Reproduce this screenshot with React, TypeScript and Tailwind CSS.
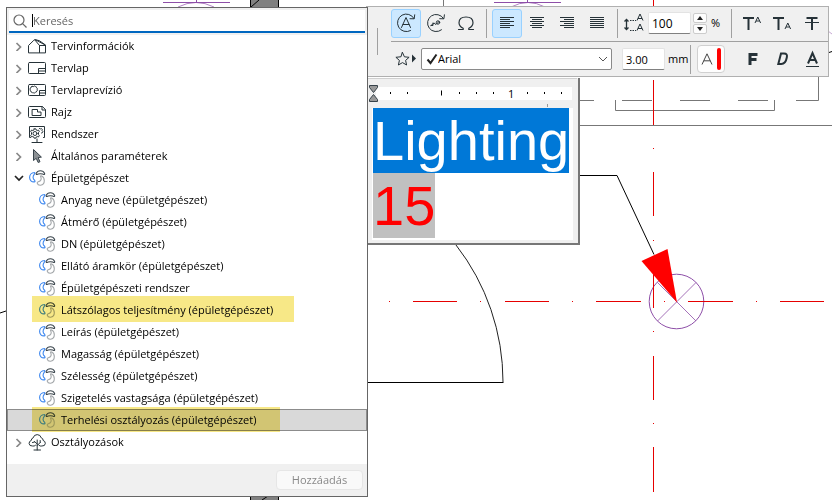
import { useState, type ReactNode } from 'react';
import clsx from 'clsx';

interface TreeItem {
    label: string;
    icon: ReactNode;
    children?: string[];
}

const stroke = { fill: 'none', stroke: '#263238', strokeWidth: 1, strokeLinejoin: 'round' as const, strokeLinecap: 'round' as const };

function HouseIcon() {
    return (
        <svg viewBox="0 0 18 18" className="w-[18px] h-[18px]" {...stroke}>
            <path d="M.5 15.5V8.5L5.8 3.3q.7-.6 1.6-.6l4 1 6.100 4.300v7.500z" />
            <path d="M6.800 2.900l4.700 5.600v7M7.500 2.800l9.700 5.200M11.500 8.500h6" />
        </svg>
    );
}

function LayoutIcon() {
    return (
        <svg viewBox="0 0 18 18" className="w-[18px] h-[18px]" {...stroke}>
            <rect x=".5" y="3.5" width="17" height="11" rx="1" />
            <path d="M17.5 9.5h-7v5M10.5 12h7" />
        </svg>
    );
}

function RevisionIcon() {
    return (
        <svg viewBox="0 0 18 18" className="w-[18px] h-[18px]" {...stroke}>
            <rect x=".5" y="3.5" width="17" height="11" rx="1" />
            <path d="M17.5 9.5h-6v5M11.5 12h6" />
            <path d="M4 5.5q.9-.7 1.7.1.800-1.100 1.700-.1 1.200 0 1.100 1.200 1.200.5.7 1.600.7 1.100-.5 1.700 0 1.200-1.200 1.300-.7 1.100-1.800.5-1.200.6-1.800-.6-1.300-.1-1.200-1.300-1.100-.7-.5-1.700-.5-1.200.7-1.600-.1-1.100 1.100-1.100z" />
        </svg>
    );
}

function DrawingIcon() {
    return (
        <svg viewBox="0 0 18 18" className="w-[18px] h-[18px]" {...stroke}>
            <path d="M14 3.5H1.5q-1 0-1 1v9q0 1 1 1h15q1 0 1-1V7zM14 3.5V7h3.5" />
            <path d="M4.5 6.500h5v2.500h3.500v3.500H4.500z" />
        </svg>
    );
}

function SystemIcon() {
    return (
        <svg viewBox="0 0 18 18" className="w-[18px] h-[18px]" {...stroke}>
            <path d="M2.500 12.500h-1v-11h15v11h-1M9 14v3M4 17.500h10" />
            <circle cx="7" cy="8.500" r="2" />
            <path d="M6.200 3.800h1.600l.4 1.200 1 .5 1.200-.5.9 1.400-.8 1v2.200l.8 1-.9 1.400-1.200-.5-1 .5-.4 1.200H6.200l-.4-1.200-1-.5-1.200.5-.9-1.400.8-1V7.400l-.8-1L3.600 5l1.200.5 1-.5z" />
            <path d="M11.500 3.500l1 .4 1-.3.8 1-.3 1 .9.9-.5 1.200-.9.300" />
        </svg>
    );
}

function PointerIcon() {
    return (
        <svg viewBox="0 0 18 18" className="w-[18px] h-[18px]">
            <path d="M5.500 2.500v11l2.700-2.200 2 4.200 1.800-.8-1.900-4.100 3.300-.5z" fill="#8b9094" stroke="#37424a" strokeLinejoin="round" />
        </svg>
    );
}

function MepIcon() {
    return (
        <svg viewBox="0 0 18 18" className="w-[18px] h-[18px]" fill="none" strokeWidth="1.100" strokeLinejoin="round">
            <path d="M6.300 3.500C3.500 3.700 1.600 6 1.600 8.600c0 2.600 2 4.500 4.600 4.300 1-.1 1.100-1 .4-1.600C4.600 9.800 4.600 7.300 6.400 5.100c.6-.8.7-1.700-.1-1.600z" stroke="#3d87ef" />
            <path d="M9 5.500c-.8 0-1-.5-.8-1.100.7-1.700 2.200-2.700 4.200-2.700s3.500 1 4.200 2.700c.2.600 0 1.100-.8 1.100l-1.200-.4q-2.200-.7-4.400 0z" stroke="#37424a" />
            <path d="M12.600 7.500c1.300 2.400.5 4.700-2.300 5.300-.9.200-1.200.7-1.100 1.300.4 1.400 1.700 2.200 3.300 2.100 2.200-.2 3.800-2.100 3.800-4.500 0-2.200-1-4.100-2.700-4.800-.8-.3-1.300 0-1 .6z" stroke="#a2a6a9" />
        </svg>
    );
}

function TreeIcon() {
    return (
        <svg viewBox="0 0 18 18" className="w-[18px] h-[18px]" {...stroke}>
            <path d="M7.500 12.300q-1.300 1.200-3 .7-3.200.2-3.400-2.500-.1-2.300 2.200-3.100-.1-1.900 1.800-2.500Q6 1.600 9.200 1.600t4.100 3.300q2 .6 1.800 2.500 2.300.8 2.200 3.100-.2 2.700-3.400 2.500-1.700.5-3-.7" />
            <path d="M9.200 7v10M9.200 11L6.500 8.500M9.200 12.500l3-3M4.500 9.500l2-.5M12.200 9.500V7.500M6 17h6.500" />
        </svg>
    );
}

const treeItems: TreeItem[] = [
    { label: 'Tervinformációk', icon: <HouseIcon /> },
    { label: 'Tervlap', icon: <LayoutIcon /> },
    { label: 'Tervlaprevízió', icon: <RevisionIcon /> },
    { label: 'Rajz', icon: <DrawingIcon /> },
    { label: 'Rendszer', icon: <SystemIcon /> },
    { label: 'Általános paraméterek', icon: <PointerIcon /> },
    {
        label: 'Épületgépészet',
        icon: <MepIcon />,
        children: [
            'Anyag neve (épületgépészet)',
            'Átmérő (épületgépészet)',
            'DN (épületgépészet)',
            'Ellátó áramkör (épületgépészet)',
            'Épületgépészeti rendszer',
            'Látszólagos teljesítmény (épületgépészet)',
            'Leírás (épületgépészet)',
            'Magasság (épületgépészet)',
            'Szélesség (épületgépészet)',
            'Szigetelés vastagsága (épületgépészet)',
            'Terhelési osztályozás (épületgépészet)'
        ]
    },
    { label: 'Osztályozások', icon: <TreeIcon /> }
];

// highlighter marks drawn over individual parameters
const marks: Record<string, string> = {
    'Látszólagos teljesítmény (épületgépészet)': 'w-[262px] -top-[3px] -bottom-px',
    'Terhelési osztályozás (épületgépészet)': 'w-[248px] -top-[2px] -bottom-px'
};

function PlanDrawing() {
    return (
        <svg className="absolute inset-0 w-[832px] h-[500px]" viewBox="0 0 832 500" fill="none">
            <g stroke="#777">
                <path d="M443.500 0v7M818.500 77v23.500H796M768 100.500h-30M710 100.500h-30M652 100.500h-30M594 100.500h-14" />
                <path d="M615.500 100v10.500h159V100M580 125.500h252" />
            </g>
            <g stroke="#8e4fa8">
                <path d="M163 2.500h67M196.500 0v2M494 2.500h67M527.500 0v2" />
                <path d="M178 7q18-9 36 0M511 7q17-9 34 0" opacity=".7" />
                <circle cx="676.500" cy="301.500" r="27.300" />
                <path d="M657.500 282.500l38.500 38.500M696 282.500L657.500 321" opacity=".8" />
                <path d="M828 31l4 3" opacity=".5" />
            </g>
            <path d="M250.500 -1h28v502h-28z" fill="#808080" stroke="#000" />
            <path d="M251 7l8-7M262 500l6-4" stroke="#000" />
            <g stroke="#000">
                <path d="M0 313l6-2M829 52.500l3-1M580 175.500h37l37 79" />
                <path d="M368 382.500h135.500" />
                <path d="M456 245A223 223 0 0 1 503 382" stroke="#222" />
            </g>
            <g stroke="#e60000">
                <path d="M653.500 0v6M653.500 80v45M653.500 148v1M653.500 172v44M653.500 240v1M653.500 264v44M653.500 331v1M653.500 356v44M653.500 423v1M653.500 447v45" />
                <path d="M389 301.500h1M413 301.500h44M480 301.500h1M505 301.500h44M572 301.500h1M596 301.500h45M664 301.500h1M688 301.500h45M756 301.500h1M780 301.500h44" />
            </g>
            <path d="M641.500 261L667.500 249 677 302.500z" fill="#f00" />
        </svg>
    );
}

function ParameterRow({ label, selected, onSelect }: { label: string; selected: boolean; onSelect: () => void }) {
    return (
        <li className="relative">
            <button
                onClick={onSelect}
                className={clsx(
                    'flex items-center w-full h-[22px] pl-[30px] border whitespace-nowrap',
                    selected ? 'bg-[#d9d9d9] border-[#8c8c8c]' : 'border-transparent'
                )}
            >
                <MepIcon />
                <span className="pl-[5px]">{label}</span>
            </button>
            {marks[label] && (
                <span className={clsx('absolute left-[25px] bg-[#f7e887] mix-blend-multiply pointer-events-none', marks[label])} />
            )}
        </li>
    );
}

function ParameterPanel() {
    const [open, setOpen] = useState('Épületgépészet');
    const [selected, setSelected] = useState('Terhelési osztályozás (épületgépészet)');
    const [search, setSearch] = useState('');

    return (
        <div className="absolute left-[6px] top-[7px] w-[362px] border border-[#666] bg-white z-20">
            <div className="bg-[#f0f0f0] px-[2px] pt-[2px] pb-[2px]">
                <label className="flex items-center h-[23px] px-[4px] bg-white border-b-2 border-[#0067c0]">
                    <svg viewBox="0 0 14 14" className="w-[14px] h-[14px]" fill="none" stroke="#666" strokeWidth="1.200">
                        <circle cx="6" cy="6" r="5" />
                        <path d="M9.600 9.600l3.900 3.900" />
                    </svg>
                    <span className="w-px h-[13px] bg-black ml-[5px]" />
                    <input
                        type="text"
                        aria-label="Keresés"
                        placeholder="Keresés"
                        value={search}
                        onChange={(e) => setSearch(e.target.value)}
                        className="flex-1 min-w-0 outline-none placeholder:text-[#666]"
                    />
                </label>
            </div>
            <ul className="pb-[11px]">
                {treeItems.map((item) => (
                    <li key={item.label}>
                        <button
                            onClick={() => setOpen(open === item.label ? '' : item.label)}
                            className="flex items-center w-full h-[22px] pl-[7px] whitespace-nowrap"
                        >
                            {open === item.label ? (
                                <svg viewBox="0 0 10 10" className="w-[10px] h-[10px] mr-1" fill="none" stroke="#222" strokeWidth="1.700">
                                    <path d="M1 3l4 4 4-4" />
                                </svg>
                            ) : (
                                <svg viewBox="0 0 10 10" className="w-[10px] h-[10px] mr-1" fill="none" stroke="#888" strokeWidth="1.700">
                                    <path d="M2.500 2l4 4-4 4" />
                                </svg>
                            )}
                            {item.icon}
                            <span className="pl-[5px]">{item.label}</span>
                        </button>
                        {item.children && open === item.label && (
                            <ul>
                                {item.children.map((child) => (
                                    <ParameterRow key={child} label={child} selected={selected === child} onSelect={() => setSelected(child)} />
                                ))}
                            </ul>
                        )}
                    </li>
                ))}
            </ul>
            <div className="flex justify-end items-center h-8 px-1 bg-[#f0f0f0]">
                <button disabled className="w-[87px] h-5 rounded border border-[#e6e6e6] bg-[#f9f9f9] text-[#888]">
                    Hozzáadás
                </button>
            </div>
        </div>
    );
}

function ToolButton({ label, active, children }: { label: string; active?: boolean; children: ReactNode }) {
    return (
        <button
            aria-label={label}
            className={clsx(
                'flex items-center justify-center shrink-0 w-[30px] h-[29px] rounded-[3px] border',
                active ? 'bg-[#cce8ff] border-[#99d1ff]' : 'border-transparent'
            )}
        >
            {children}
        </button>
    );
}

function Divider() {
    return <span className="w-px h-[29px] bg-[#a0a0a0] shrink-0" />;
}

function AlignIcon({ d }: { d: string }) {
    return (
        <svg viewBox="0 0 16 12" className="w-[16px] h-[12px]" stroke="#263238" fill="none">
            <path d={d} />
        </svg>
    );
}

function TextToolbar() {
    const [spacing, setSpacing] = useState(100);
    const [size, setSize] = useState('3.00');

    return (
        <div className="absolute left-[366px] right-[3px] top-[6px] flex bg-[#f0f0f0] border border-[#b0b0b0] z-10">
            <span className="w-px h-[27px] mt-[21px] ml-[10px] bg-[#a0a0a0] shrink-0" />
            <div className="flex-1 min-w-0 ml-[13px]">
                <div className="flex items-center h-[35px] pb-1 pt-[2px] border-b border-[#a0a0a0]">
                    <ToolButton label="Szöveg forgatása" active>
                        <svg viewBox="0 0 20 20" className="w-5 h-5" {...stroke}>
                            <path d="M18 5.500A8.800 8.800 0 1 0 14.500 17.600M14 5.700l4.200.100.500-4" />
                            <path d="M5.500 14.500L10 4.500l4.500 10.000M7 11.500h6" />
                        </svg>
                    </ToolButton>
                    <ToolButton label="Követő forgatás">
                        <svg viewBox="0 0 20 20" className="w-5 h-5" {...stroke}>
                            <path d="M17.500 5.500A8.600 8.600 0 1 0 15.500 16.800M13.700 5.700l4.200.100.500-4" />
                            <circle cx="12" cy="9.500" r="1.700" />
                            <path d="M5 12.500L8 10l2 1.500 3.200-3.200M7 10v2.500H5" />
                        </svg>
                    </ToolButton>
                    <ToolButton label="Szimbólum">
                        <svg viewBox="0 0 20 20" className="w-5 h-5" {...stroke} strokeWidth="1.200">
                            <path d="M2.500 16.500h4.700v-1.200Q3 13.400 3 9.800 3 4 10 4t7 5.800q0 3.600-4.200 5.500v1.200h4.700" />
                        </svg>
                    </ToolButton>
                    <span className="ml-[5px] mr-[5px] flex"><Divider /></span>
                    <ToolButton label="Balra" active>
                        <AlignIcon d="M1 .5h14M1 2.500h10M1 4.500h14M1 6.500h10M1 8.500h14M1 10.500h10" />
                    </ToolButton>
                    <ToolButton label="Középre">
                        <AlignIcon d="M1 .5h14M3 2.500h10M1 4.500h14M3 6.500h10M1 8.500h14M3 10.500h10" />
                    </ToolButton>
                    <ToolButton label="Jobbra">
                        <AlignIcon d="M1 .5h14M5 2.500h10M1 4.500h14M5 6.500h10M1 8.500h14M5 10.500h10" />
                    </ToolButton>
                    <ToolButton label="Sorkizárt">
                        <AlignIcon d="M1 .5h14M1 2.500h14M1 4.500h14M1 6.500h14M1 8.500h14M1 10.500h14" />
                    </ToolButton>
                    <span className="ml-[5px] mr-[6px] flex"><Divider /></span>
                    <label htmlFor="spacing" aria-label="Sorköz" className="shrink-0">
                        <svg viewBox="0 0 20 20" className="w-5 h-5" fill="none" stroke="#263238">
                            <path d="M2.500 7v9M.5 8.500l2-2 2 2M.5 14.500l2 2 2-2" strokeWidth="1.300" />
                            <path d="M6 7.500h6M6 17.500h6" strokeDasharray="1.500 1" />
                            <path d="M13 7.500l3-6.500 3 6.500M14 5.500h4M13 17.500l3-6.500 3 6.500M14 15.500h4" />
                        </svg>
                    </label>
                    <input
                        id="spacing"
                        value={spacing}
                        onChange={(e) => setSpacing(Number(e.target.value) || 0)}
                        className="w-[43px] h-[22px] ml-[4px] px-[3px] bg-white border border-[#e3e3e3] border-b-[#808080] rounded-[2px] outline-none text-[12px]"
                    />
                    <div className="flex flex-col ml-[2px] gap-px">
                        <button aria-label="Növelés" onClick={() => setSpacing(spacing + 1)} className="flex items-center justify-center w-[14px] h-[10px] bg-[#fdfdfd] border border-[#ccc] rounded-[2px]">
                            <svg viewBox="0 0 6 4" className="w-[6px] h-[4px]"><path d="M0 4l3-4 3 4z" fill="#222" /></svg>
                        </button>
                        <button aria-label="Csökkentés" onClick={() => setSpacing(spacing - 1)} className="flex items-center justify-center w-[14px] h-[10px] bg-[#fdfdfd] border border-[#ccc] rounded-[2px]">
                            <svg viewBox="0 0 6 4" className="w-[6px] h-[4px]"><path d="M0 0l3 4 3-4z" fill="#222" /></svg>
                        </button>
                    </div>
                    <span className="ml-[4px] mr-[10px] w-[10px]">%</span>
                    <Divider />
                    <div className="flex ml-[5px]">
                        <ToolButton label="Felső index">
                            <svg viewBox="0 0 20 16" className="w-5 h-4" fill="none" stroke="#263238">
                                <path d="M1 3h11M6.500 3v12" strokeWidth="2" />
                                <path d="M13 8l2.800-6 2.800 6M14 6h3.600" />
                            </svg>
                        </ToolButton>
                        <ToolButton label="Alsó index">
                            <svg viewBox="0 0 20 16" className="w-5 h-4" fill="none" stroke="#263238">
                                <path d="M1 3h11M6.500 3v12" strokeWidth="2" />
                                <path d="M13 14l2.800-6 2.800 6M14 12h3.600" />
                            </svg>
                        </ToolButton>
                        <ToolButton label="Áthúzott">
                            <svg viewBox="0 0 20 16" className="w-5 h-4" fill="none" stroke="#263238">
                                <path d="M4.500 3h11M10 3v12" strokeWidth="2" />
                                <path d="M3 7.500h14" />
                            </svg>
                        </ToolButton>
                    </div>
                </div>
                <div className="flex items-center h-[34px]">
                    <button aria-label="Kedvencek" className="flex items-center shrink-0 w-[26px] ml-[4px]">
                        <svg viewBox="0 0 22 16" className="w-[22px] h-4" {...stroke}>
                            <path d="M7.500 1.500l1.900 4.300 4.700.5-3.500 3.100 1 4.600-4.100-2.400L3.400 14l1-4.600L.9 6.300l4.700-.5z" />
                            <path d="M17 3.500v8l4-4z" fill="#263238" stroke="none" />
                        </svg>
                    </button>
                    <div className="relative flex flex-1 items-center h-[22px] bg-white border border-[#8a8a8a] rounded-[2px]">
                        <svg viewBox="0 0 12 12" className="absolute left-[4px] w-[12px] h-[12px]" fill="none" stroke="#222" strokeWidth="2">
                            <path d="M1.500 6.500L4.500 10 10.500 1.500" />
                        </svg>
                        <select aria-label="Betűtípus" className="appearance-none w-full h-full pl-[16px] bg-transparent outline-none">
                            <option>Arial</option>
                        </select>
                        <svg viewBox="0 0 10 6" className="absolute right-[3px] w-[10px] h-[6px] pointer-events-none" fill="none" stroke="#555">
                            <path d="M1 1l4 4 4-4" />
                        </svg>
                    </div>
                    <input
                        id="size"
                        value={size}
                        onChange={(e) => setSize(e.target.value)}
                        className="w-[43px] h-[22px] ml-[10px] px-[3px] bg-white border border-[#e3e3e3] border-b-[#808080] rounded-[2px] outline-none"
                    />
                    <label htmlFor="size" className="w-[18px] ml-[3px] mr-[4px]">mm</label>
                    <Divider />
                    <button aria-label="Tollszín" className="flex items-center justify-center gap-1 shrink-0 w-[28px] h-[28px] ml-[6px] rounded border border-[#d0d0d0] bg-[#fdfdfd]">
                        <svg viewBox="0 0 12 12" className="w-[12px] h-[12px]" fill="none" stroke="#444">
                            <path d="M1 11.500L6 .8l5 10.700M2.800 7.800h6.400" />
                        </svg>
                        <span className="w-[4px] h-[22px] rounded-sm bg-[#f00]" />
                    </button>
                    <div className="flex ml-[13px]">
                        <ToolButton label="Félkövér">
                            <svg viewBox="0 0 20 18" className="w-5 h-[18px]" fill="none" stroke="#263238">
                                <path d="M7 15V4.500h7.500M7 9.500h6.500" strokeWidth="3" />
                            </svg>
                        </ToolButton>
                        <ToolButton label="Dőlt">
                            <svg viewBox="0 0 20 18" className="w-5 h-[18px]" fill="none" stroke="#263238" strokeWidth="2">
                                <path d="M8 3.500h3q3.800 0 2.800 4-1.200 6.500-5.500 6.500H5.300z" />
                            </svg>
                        </ToolButton>
                        <ToolButton label="Aláhúzott">
                            <svg viewBox="0 0 20 18" className="w-5 h-[18px]" fill="none" stroke="#263238">
                                <path d="M5 13.500L9.500 3 14 13.500M6.500 10h6" strokeWidth="2" />
                                <path d="M3 16.500h13" />
                            </svg>
                        </ToolButton>
                    </div>
                </div>
            </div>
        </div>
    );
}

function TextEditor() {
    return (
        <div className="absolute left-[367px] top-[78px] w-[213px] pl-[5px] pr-[5px] pb-[3px] bg-[#f0f0f0] border-r-2 border-b-2 border-[#777]">
            <svg viewBox="0 0 201 30" className="block w-full h-[30px] overflow-visible">
                <path d="M4 9h196v13H4z" fill="#fff" />
                <path d="M-4 .5h209" stroke="#d0d0d0" />
                <path d="M18 15h1M35 15h1M87 15h1M104 15h1M121 15h1M155 15h1M172 15h1M189 15h1" stroke="#000" strokeWidth="2" />
                <path d="M69.500 12.500v5" stroke="#000" />
                <path d="M175.500 26v3" stroke="#999" />
                <text x="136" y="20" fontSize="11" fill="#000">1</text>
                <path d="M-2.500 7.500h8v2l-4 5-4-5zM-2.500 23.500h8v-2l-4-5-4 5z" fill="#999" stroke="#37424a" />
            </svg>
            <div
                role="textbox"
                aria-label="Szöveg"
                contentEditable
                suppressContentEditableWarning
                className="pl-px pb-[2px] bg-white outline-none font-['Liberation_Sans',sans-serif] text-[56px] leading-[65px] whitespace-nowrap"
            >
                <div className="w-fit bg-[#0078d7] text-white">Lighting</div>
                <div className="w-fit bg-[#c0c0c0] text-[#f00]">15</div>
            </div>
        </div>
    );
}

export default function App() {
    return (
        <main className="relative min-h-screen min-w-[760px] overflow-hidden bg-white text-black text-[11px] leading-4 font-['Open_Sans',sans-serif]">
            <PlanDrawing />
            <TextEditor />
            <TextToolbar />
            <ParameterPanel />
        </main>
    );
}
